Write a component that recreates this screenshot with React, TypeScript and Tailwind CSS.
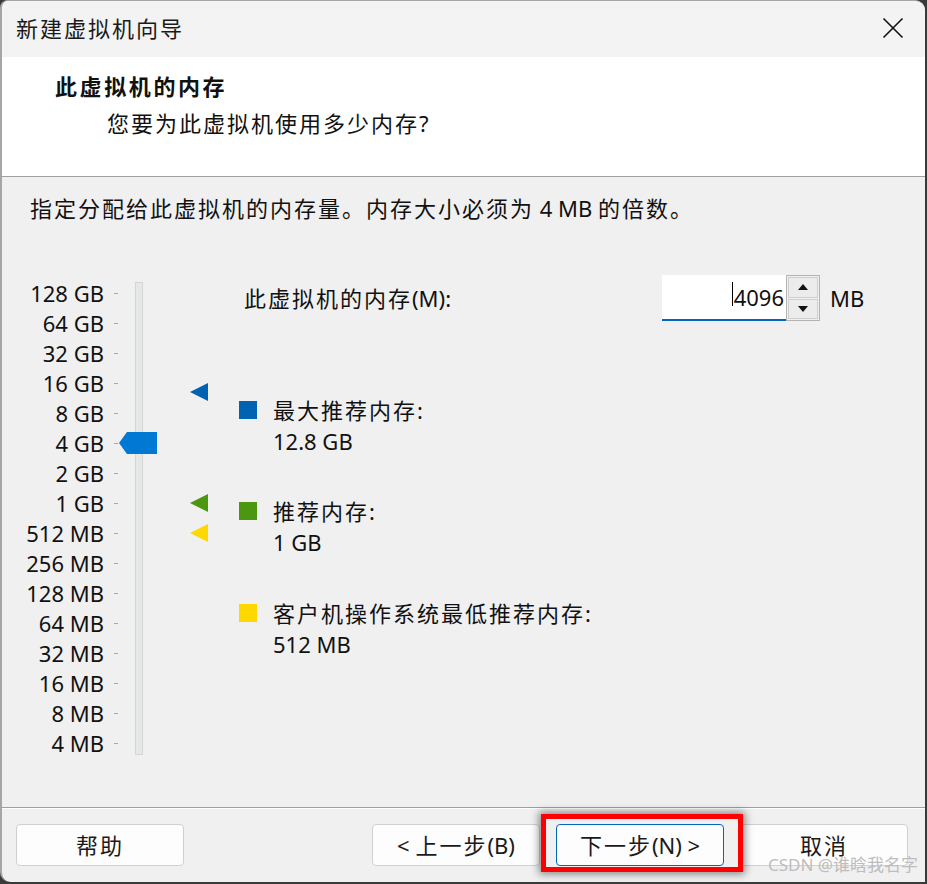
import React from "react";

const labels = [
  "128 GB", "64 GB", "32 GB", "16 GB", "8 GB", "4 GB", "2 GB", "1 GB",
  "512 MB", "256 MB", "128 MB", "64 MB", "32 MB", "16 MB", "8 MB", "4 MB",
];

const CJK = /([\u3000-\u303f\u4e00-\u9fff\uff00-\uffef]+)/;

function T({ text, wide }: { text: string; wide?: boolean }) {
  const parts = text.split(CJK).filter((p) => p.length > 0);
  return (
    <>
      {parts.map((p, i) =>
        CJK.test(p) ? (
          <span key={i} className={wide ? "tracking-[2.6px]" : "tracking-[2px]"}>
            {p}
          </span>
        ) : (
          <span key={i}>{p}</span>
        )
      )}
    </>
  );
}

function Tri({ color, top }: { color: string; top: string }) {
  return (
    <svg
      className={`absolute left-[188px] ${top}`}
      width="18"
      height="18"
      viewBox="0 0 18 18"
    >
      <polygon points="0,9 18,0 18,18" fill={color} />
    </svg>
  );
}

function Btn({ text, primary }: { text: string; primary?: boolean }) {
  return (
    <div
      className={`w-[168px] h-[42px] flex items-center justify-center rounded-[4px] bg-[#fdfdfd] border ${
        primary ? "border-[#0067c0]" : "border-[#d0d0d0]"
      } text-[22px] leading-[30px] text-[#1a1a1a] whitespace-pre`}
    >
      <T text={text} />
    </div>
  );
}

export default function App() {
  return (
    <div
      className="w-[927px] h-[884px] bg-[#3a3a3a] overflow-hidden"
      style={{ fontFamily: '"Noto Sans", "Noto Sans CJK SC", sans-serif' }}
    >
      <div className="relative w-[925px] h-[882px] bg-[#f0f0f0] rounded-tl-[8px] rounded-tr-[10px] rounded-bl-[10px] border-l-2 border-t border-[#a6a6a6] overflow-hidden flex flex-col text-[#111]">
        {/* Title bar */}
        <div className="h-[56px] shrink-0 bg-[#f3f3f3] flex items-center justify-between pl-[14px] pr-[21px] pb-[3px]">
          <span className="text-[22px] leading-[30px] text-[#1a1a1a]">
            <T text="新建虚拟机向导" />
          </span>
          <svg width="22" height="22" viewBox="0 0 22 22">
            <path d="M1.5 1.5 L20.5 20.5 M20.5 1.5 L1.5 20.5" stroke="#111" strokeWidth="1.6" />
          </svg>
        </div>

        {/* Header */}
        <div className="h-[120px] shrink-0 bg-white border-b border-[#a0a0a0] pt-[14px] pl-[53px]">
          <div className="text-[22px] leading-[30px] font-bold">
            <T text="此虚拟机的内存" wide />
          </div>
          <div className="text-[22px] leading-[30px] mt-[7px] ml-[52px]">
            <T text="您要为此虚拟机使用多少内存?" />
          </div>
        </div>

        {/* Content */}
        <div className="h-[630px] shrink-0 pt-[16px]">
          <div className="pl-[28px] text-[22px] leading-[30px]">
            <T text="指定分配给此虚拟机的内存量。内存大小必须为 4 MB 的倍数。" />
          </div>

          <div className="relative mt-[52px] flex">
            {/* labels */}
            <div className="w-[117px] pt-[3px] flex flex-col">
              {labels.map((l) => (
                <div key={l} className="h-[30px] flex items-center justify-end">
                  <span className="text-[22px] leading-[30px]">{l}</span>
                  <span className="ml-[10px] mr-[1px] w-[4px] h-px bg-[#a8a8a8]" />
                </div>
              ))}
            </div>
            {/* track */}
            <div className="ml-[16px] mt-[7px] w-[8px] h-[473px] bg-[#e6e8e8] border border-[#d4d6d6]" />

            {/* thumb */}
            <svg className="absolute left-[117px] top-[157px]" width="38" height="22" viewBox="0 0 38 22">
              <polygon points="0,11 8,0 38,0 38,22 8,22" fill="#0078d4" />
            </svg>
            <Tri color="#0063b1" top="top-[108px]" />
            <Tri color="#4b9710" top="top-[219px]" />
            <Tri color="#ffd800" top="top-[249px]" />

            {/* right side */}
            <div className="ml-[96px] flex flex-col">
              <div className="flex items-center h-[46px]">
                <span className="pl-[5px] w-[423px] text-[22px] leading-[30px]">
                  <T text="此虚拟机的内存(M):" />
                </span>
                <div className="relative w-[124px] h-[46px] bg-white border-b-2 border-[#0067c0] flex items-center justify-end pr-[2px]">
                  <span className="text-[22px] leading-[30px]">4096</span>
                  <span className="absolute left-[70px] top-[7px] w-px h-[24px] bg-black" />
                </div>
                <div className="w-[34px] h-[46px] border border-[#b4b4b4] flex flex-col p-px gap-px bg-[#f0f0f0]">
                  <div className="flex-1 border border-[#cfcfcf] bg-[#ececec] flex items-center justify-center">
                    <svg width="10" height="6" viewBox="0 0 10 6"><polygon points="5,0 10,6 0,6" fill="#111" /></svg>
                  </div>
                  <div className="flex-1 border border-[#cfcfcf] bg-[#ececec] flex items-center justify-center">
                    <svg width="10" height="6" viewBox="0 0 10 6"><polygon points="0,0 10,0 5,6" fill="#111" /></svg>
                  </div>
                </div>
                <span className="ml-[10px] text-[22px] leading-[30px]">MB</span>
              </div>

              <div className="mt-[74px] flex">
                <span className="mt-[6px] w-[18px] h-[18px] bg-[#0063b1]" />
                <div className="ml-[16px] text-[22px] leading-[31px]">
                  <div><T text="最大推荐内存:" /></div>
                  <div>12.8 GB</div>
                </div>
              </div>
              <div className="mt-[39px] flex">
                <span className="mt-[6px] w-[18px] h-[18px] bg-[#4b9710]" />
                <div className="ml-[16px] text-[22px] leading-[31px]">
                  <div><T text="推荐内存:" /></div>
                  <div>1 GB</div>
                </div>
              </div>
              <div className="mt-[40px] flex">
                <span className="mt-[6px] w-[18px] h-[18px] bg-[#ffd800]" />
                <div className="ml-[16px] text-[22px] leading-[31px]">
                  <div><T text="客户机操作系统最低推荐内存:" /></div>
                  <div>512 MB</div>
                </div>
              </div>
            </div>
          </div>
        </div>

        {/* Footer */}
        <div className="flex-1 border-t border-[#a0a0a0] shadow-[inset_0_1px_0_#ffffff] pt-[16px] pl-[14px] pr-[17px] flex items-start">
          <Btn text="帮助" />
          <div className="ml-auto flex gap-[16px]">
            <Btn text="< 上一步(B)" />
            <Btn text="下一步(N) >" primary />
            <Btn text="取消" />
          </div>
        </div>

        {/* annotation */}
        <div className="absolute left-[539px] top-[813px] w-[202px] h-[58px] border-[5px] border-[#ff0000] shadow-[0_0_8px_2px_rgba(0,0,0,0.45)]" />
        <div className="absolute left-[766px] top-[852px] text-[17px] leading-[24px] text-[#bdbdbd]">
          CSDN @谁晗我名字
        </div>
      </div>
    </div>
  );
}
